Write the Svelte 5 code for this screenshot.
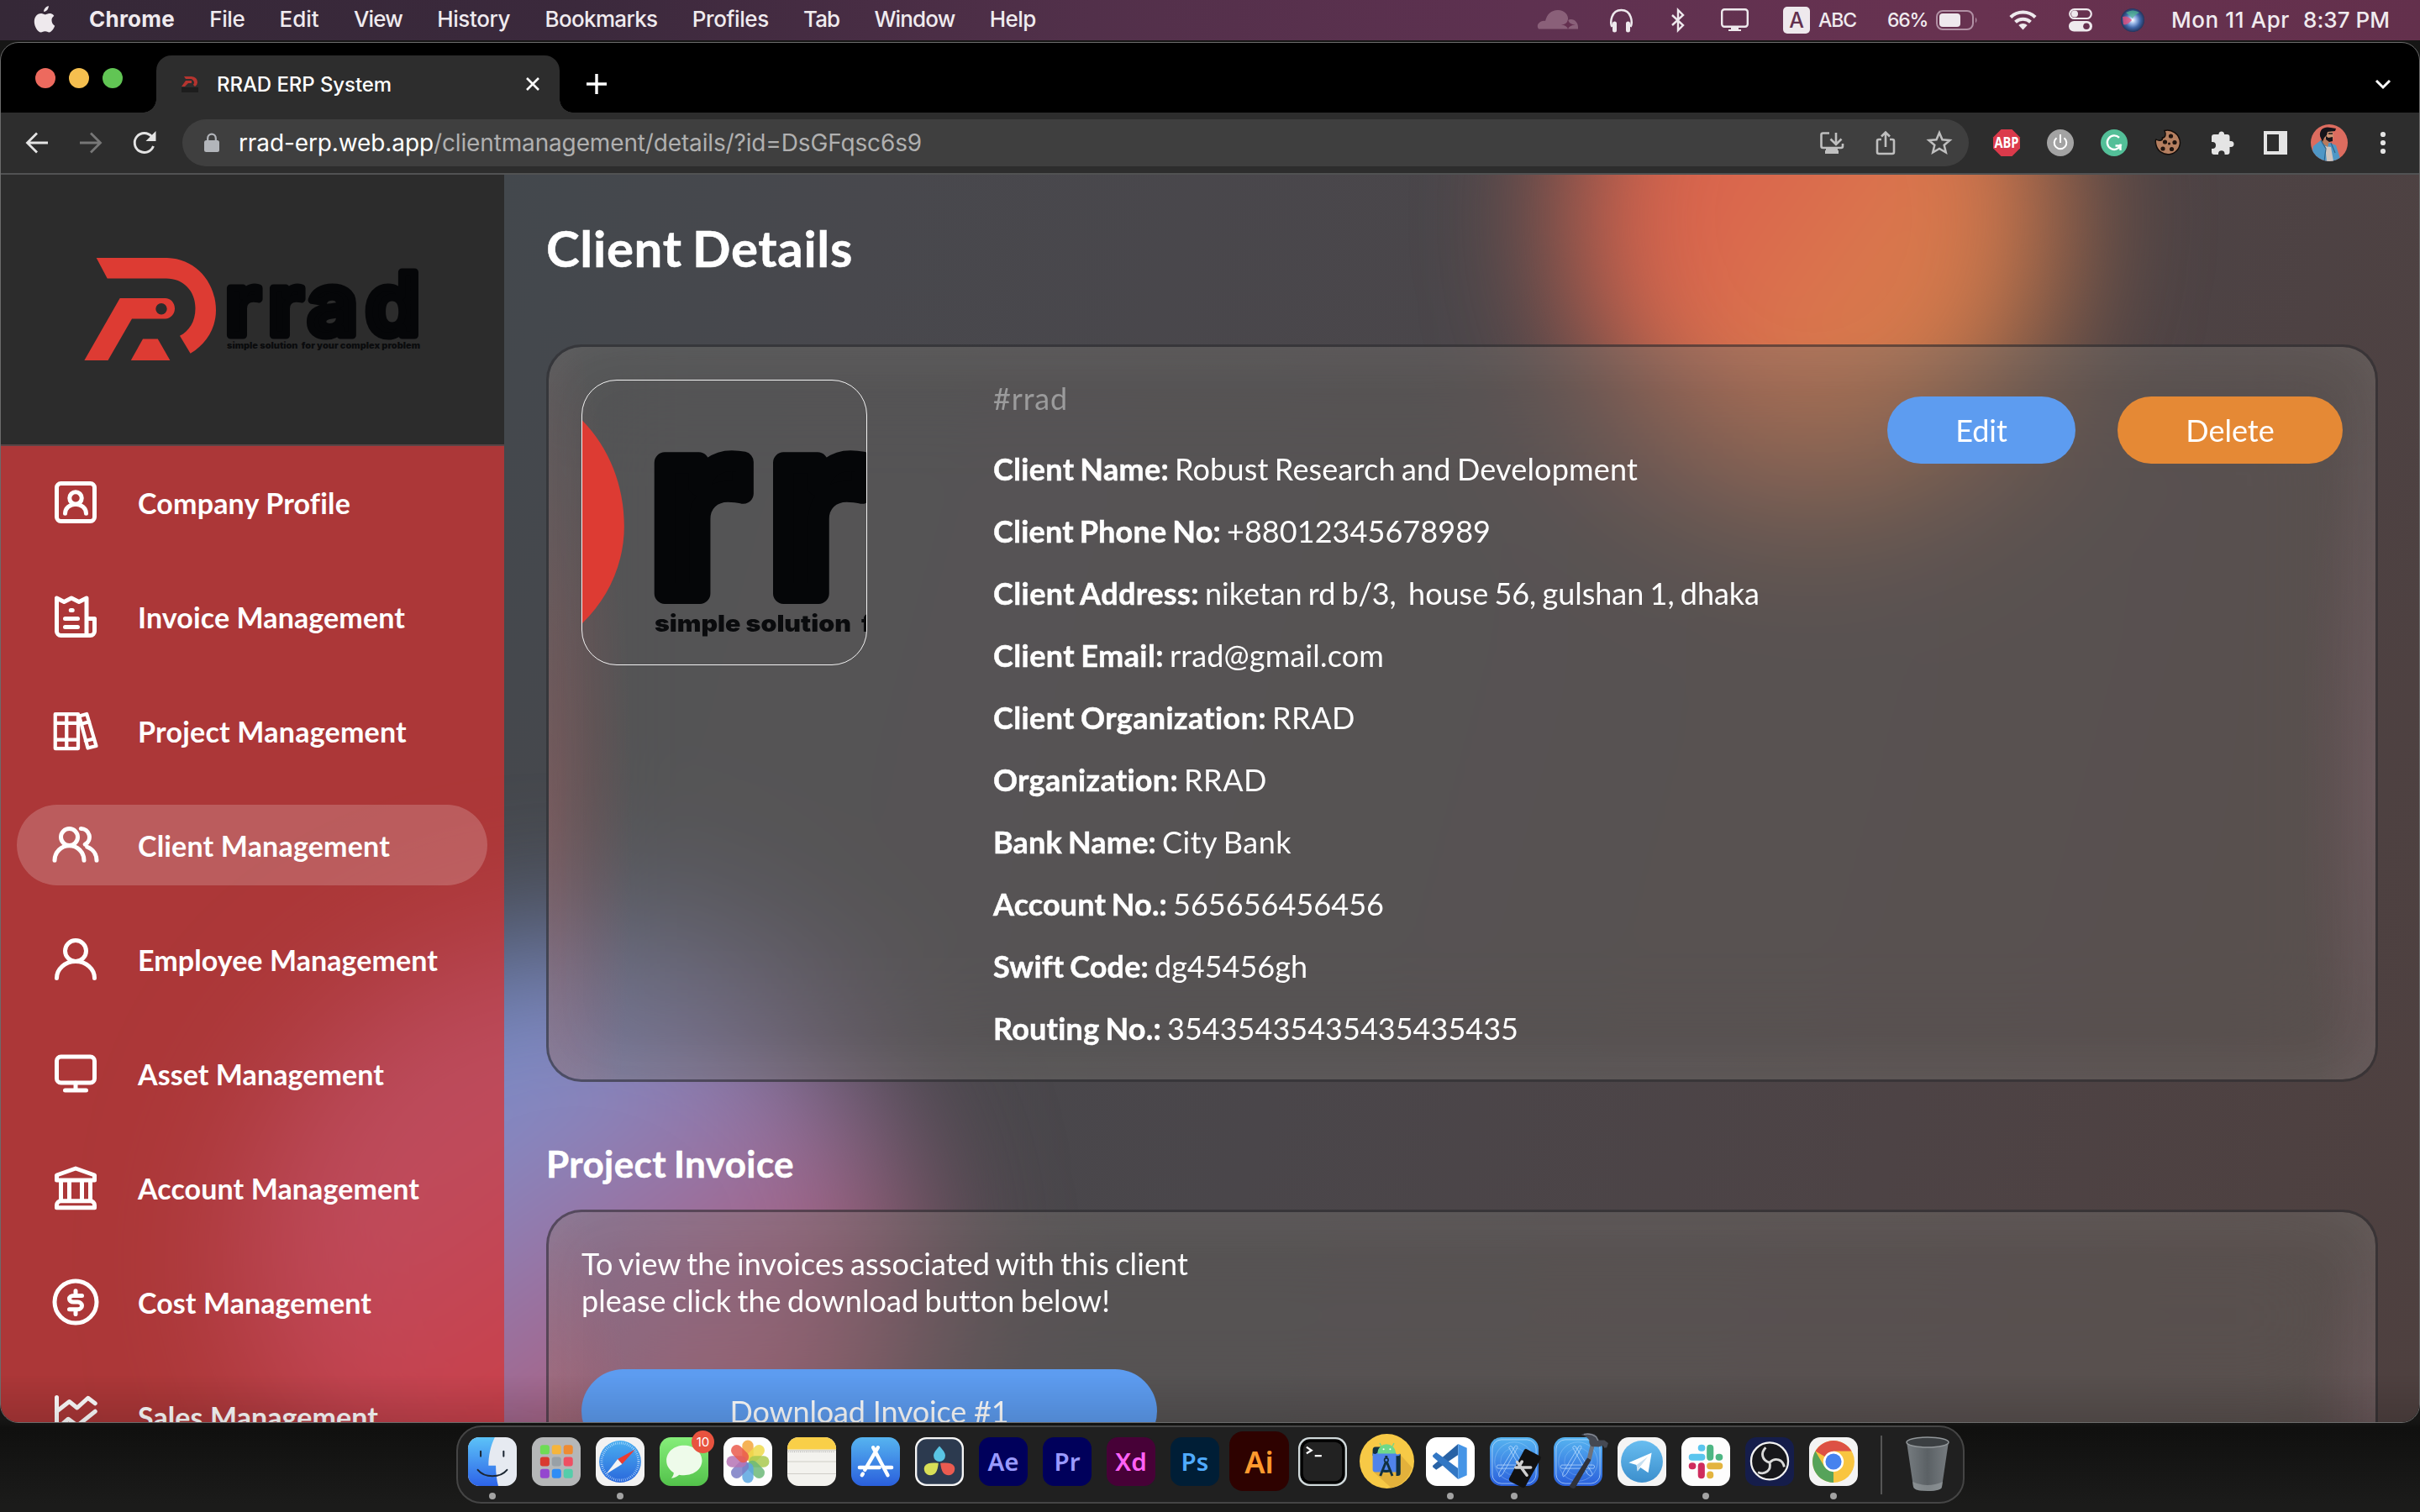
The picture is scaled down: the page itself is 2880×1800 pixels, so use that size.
<script>
  const menus = [
    ['Chrome', 102], ['File', 42], ['Edit', 47], ['View', 58], ['History', 87],
    ['Bookmarks', 134], ['Profiles', 91], ['Tab', 43], ['Window', 96], ['Help', 55]
  ];

  const nav = [
    { id: 'profile', label: 'Company Profile', w: 253 },
    { id: 'invoice', label: 'Invoice Management', w: 318 },
    { id: 'project', label: 'Project Management', w: 320 },
    { id: 'client', label: 'Client Management', w: 300, active: true },
    { id: 'employee', label: 'Employee Management', w: 357 },
    { id: 'asset', label: 'Asset Management', w: 293 },
    { id: 'account', label: 'Account Management', w: 335 },
    { id: 'cost', label: 'Cost Management', w: 278 },
    { id: 'sales', label: 'Sales Management', w: 286 }
  ];

  const details = [
    ['Client Name:', 209, 'Robust Research and Development', 551],
    ['Client Phone No:', 271, '+88012345678989', 314],
    ['Client Address:', 245, 'niketan rd b/3, \u00a0house 56, gulshan 1, dhaka', 660],
    ['Client Email:', 203, 'rrad@gmail.com', 255],
    ['Client Organization:', 325, 'RRAD', 99],
    ['Organization:', 220, 'RRAD', 99],
    ['Bank Name:', 194, 'City Bank', 154],
    ['Account No.:', 207, '565656456456', 251],
    ['Swift Code:', 185, 'dg45456gh', 182],
    ['Routing No.:', 200, '35435435435435435435', 418]
  ];

  const apps = [
    { id: 'finder', running: true }, { id: 'launchpad' }, { id: 'safari', running: true },
    { id: 'messages' }, { id: 'photos' }, { id: 'notes' }, { id: 'appstore' }, { id: 'resolve' },
    { id: 'adobe', text: 'Ae', bg: '#00005b', fg: '#9a9aff' },
    { id: 'adobe', text: 'Pr', bg: '#00005b', fg: '#9a9aff' },
    { id: 'adobe', text: 'Xd', bg: '#470137', fg: '#ff61f6' },
    { id: 'adobe', text: 'Ps', bg: '#001e36', fg: '#4fabff' },
    { id: 'illustrator' }, { id: 'terminal' }, { id: 'android' },
    { id: 'vscode', running: true }, { id: 'simulator', running: true }, { id: 'xcode' },
    { id: 'telegram' }, { id: 'slack', running: true }, { id: 'obs' }, { id: 'chrome', running: true }
  ];

  const petals = ['#f3a53a', '#efd94a', '#a9c94f', '#6cb878', '#5aa6e0', '#7a7cc4', '#b573b5', '#ea5b4c'];
  const pads = ['#6fdc55', '#f6b53c', '#ee8b32', '#d93a2f', '#98a0a6', '#ef4f62', '#9447cf', '#2f8df5', '#55cdaa'];

  // Spreads letters so a label occupies the given width.
  function fit(node, width) {
    const natural = node.getBoundingClientRect().width;
    const step = (width - natural) / node.textContent.length;
    node.style.letterSpacing = `${step}px`;
  }
</script>

{#snippet logo(kind)}
  <svg class={kind} viewBox="100 308 400 122" preserveAspectRatio="xMidYMid slice">
    <g fill="#dd3b33">
      <path d="M114.7 308H199C234 309 257 338 257 370.500C257 392 245 411 226.600 421.700L214 400.800C225 395 232.500 384 232.500 368C232.500 347 218 332.400 197.700 332.400H127.700Z" />
      <path fill-rule="evenodd" d="M142.700 356H196.500C203 356 208 361.500 208 368.200S203 380.400 196.500 380.400H157L128.500 430H100.400ZM192 362A6.700 6.700 0 1 0 192 375.400A6.700 6.700 0 1 0 192 362Z" />
      <path d="M170 404.400H187.800L202.400 430H155.800Z" />
    </g>
    <text class="word" x="268 319 366 435" y="399.500">rrad</text>
    <text class="tag" x="270" y="415.800" textLength="230" lengthAdjust="spacingAndGlyphs">simple solution &#160;for your complex problem</text>
  </svg>
{/snippet}

{#snippet navIcon(id)}
  <svg class="nav-icon" viewBox="0 0 24 24">
    {#if id === 'profile'}
      <rect x="3" y="3" width="18" height="18" rx="2" />
      <circle cx="12" cy="10" r="2.900" />
      <path d="M7 17.300a5 4.400 0 0 1 10 0" />
    {:else if id === 'invoice'}
      <path d="M17.200 21V3.200L13.600 5 10 3.200 6.500 5 3 3.200V19a2 2 0 0 0 2 2h14a2 2 0 0 0 2-2v-6h-3.800M9.700 9h.8M7 13h6M7 17h6" />
    {:else if id === 'project'}
      <g stroke-width="1.700">
        <path d="M2.300 4H13.200V20.400H2.300ZM7.700 4V20.400M2.300 8.300H13M2.300 16.200H13" />
        <path d="M13.700 5 17.300 4 21.800 19.200 17.800 20.200ZM14.700 8.700 18.500 7.700M16.700 16.800 20.700 15.800" />
      </g>
    {:else if id === 'client'}
      <circle cx="9" cy="8.200" r="4" />
      <path d="M2 19.300a7 7 0 0 1 14 0M14.500 4.200a4 4 0 0 1 2 7.500M17.500 12.900C20.300 14 22 16.500 22 19.300" />
    {:else if id === 'employee'}
      <circle cx="12" cy="8" r="5" />
      <path d="M3 21a9 8 0 0 1 18 0" />
    {:else if id === 'asset'}
      <rect x="3" y="4" width="18" height="12.400" rx="2" />
      <path d="M12 16.500V20M7 20h10" />
    {:else if id === 'account'}
      <path d="M3 6 12 2.800 21 6v2.400H3ZM5 9v9M9 9v9M15 9v9M19 9v9M5 18.300h14a2 2 0 0 1 2 2v1.200H3v-1.200a2 2 0 0 1 2-2Z" />
    {:else if id === 'cost'}
      <circle cx="12" cy="12" r="10" />
      <path d="M15 9h-4a2 1.500 0 0 0-2 1.500 2 1.500 0 0 0 2 1.500h2a2 1.750 0 0 1 2 1.750 2 1.750 0 0 1-2 1.750H9M12 6.700V9M12 15.500v2.300" />
    {:else}
      <path d="M3 3v18M3 9.700 9 5l3.700 3L17.900 3.300l3.400 2.600M3 18l5.500-4.700 4.300 3.200 8.500-6.800" />
    {/if}
  </svg>
{/snippet}

{#snippet tile(fill)}
  <rect width="100" height="100" rx="23" {fill} />
{/snippet}

{#snippet blueprint()}
  {@render tile('url(#gStore)')}
  <g fill="none" stroke="#c4e2ff" stroke-opacity=".75" stroke-width="1.600">
    <rect x="5" y="5" width="90" height="90" rx="19" />
    <circle cx="50" cy="50" r="40" stroke-opacity=".35" />
    <circle cx="50" cy="50" r="28" stroke-opacity=".25" />
    <path d="M39 21Q41 16 45 19L79 74Q80 80 75 79L70 76ZM52 18Q57 16 57 21L26 76 20 81Q17 78 19 73ZM16 57H82Q86 60 82 64H16Q12 60 16 57Z" />
  </g>
{/snippet}

{#snippet appIcon(app)}
  <svg class="app-icon" class:large={app.id === 'illustrator'} class:round={app.id === 'android'} viewBox="0 0 100 100">
    {#if app.id === 'finder'}
      {@render tile('#e6eaf1')}
      <path d="M23 0H55C46 18 42 38 42 58H57C57 74 59 88 62 100H23A23 23 0 0 1 0 77V23A23 23 0 0 1 23 0Z" fill="url(#gFinder)" />
      <path d="M26 29v10M73 29v10M20 67C34 84 66 84 80 67" fill="none" stroke="#1c2733" stroke-width="3.500" stroke-linecap="round" />
    {:else if app.id === 'launchpad'}
      {@render tile('#b5b7b8')}
      {#each pads as color, i}
        <rect x={17 + (i % 3) * 24} y={16 + Math.floor(i / 3) * 24.500} width="19" height="19" rx="5" fill={color} />
      {/each}
    {:else if app.id === 'safari'}
      {@render tile('#f2f2f2')}
      <circle cx="50" cy="50" r="43" fill="url(#gSafari)" />
      <circle cx="50" cy="50" r="38" fill="none" stroke="#d7ecff" stroke-width="5" stroke-dasharray="1 3" />
      <path d="M81 25 45 45 54 55Z" fill="#ee3b30" />
      <path d="M21 76 45 45 54 55Z" fill="#f4f4f4" />
    {:else if app.id === 'messages'}
      {@render tile('url(#gMsg)')}
      <path d="M50 17C29 17 14 31 14 48C14 59 20 67 29 73C29 78 26 82 24 84C31 83 37 80 40 77C65 82 87 68 87 48C87 31 71 17 50 17Z" fill="#eefbea" />
    {:else if app.id === 'photos'}
      {@render tile('#fdfdfd')}
      {#each petals as color, i}
        <rect x="38.500" y="6" width="23" height="42" rx="11.500" fill={color} fill-opacity=".85" transform={`rotate(${i * 45} 50 50)`} />
      {/each}
    {:else if app.id === 'notes'}
      {@render tile('#f3f2ee')}
      <path d="M0 25V23A23 23 0 0 1 23 0H77A23 23 0 0 1 100 23V25Z" fill="#f9cf48" />
      <path d="M0 27H100M0 50H100M0 75H100" stroke="#c9c7c2" stroke-width="1.500" />
      <path d="M2 30H98" stroke="#aaa" stroke-width="2" stroke-dasharray="1.500 2.500" />
    {:else if app.id === 'appstore'}
      {@render tile('url(#gStore)')}
      <path d="M45 21 75 78M55 21 28 67M17 62H58M69 62H83M24 75 22 78" stroke="#fff" stroke-width="7.500" stroke-linecap="round" />
    {:else if app.id === 'resolve'}
      {@render tile('#f5f5f5')}
      <rect x="4" y="4" width="92" height="92" rx="20" fill="#2c3a4f" />
      <path d="M50 18C60 29 62 34 62 38A12 12 0 0 1 38 38C38 34 40 29 50 18Z" fill="#59c4e4" />
      <path d="M48 53C46 70 42 78 31 78A13 13 0 0 1 20 59C25 52 34 52 48 53Z" fill="#d8df57" />
      <path d="M52 53C54 70 58 78 69 78A13 13 0 0 0 80 59C75 52 66 52 52 53Z" fill="#ea5b50" />
    {:else if app.id === 'adobe'}
      {@render tile(app.bg)}
      <text class="adobe" x="50" y="69" fill={app.fg}>{app.text}</text>
    {:else if app.id === 'illustrator'}
      {@render tile('#2e0200')}
      <text class="adobe" x="50" y="70" fill="#ff9a2e">Ai</text>
    {:else if app.id === 'terminal'}
      {@render tile('#cfd8da')}
      <rect x="4" y="4" width="92" height="92" rx="20" fill="#000" />
      <rect x="10" y="10" width="80" height="80" rx="15" fill="#222" />
      <path d="M17 20 27 27 17 33M34 38H48" fill="none" stroke="#fff" stroke-width="4" />
    {:else if app.id === 'android'}
      <circle cx="50" cy="50" r="50" fill="#f7c946" />
      <path d="M73 36 96 62A50 50 0 0 1 58 99L26 70Z" fill="#e3b13b" />
      <path d="M24 30Q24 24 29 24H40V40H24Z" fill="#12303f" />
      <path d="M24 34Q24 37 29 37L34 34H66Q66 40 74 36V70H29Q24 70 24 65Z" fill="#5083ea" />
      <path d="M34 35A15.500 15 0 0 1 65 35ZM40 23 37 17M60 23 63 17" fill="#6fd98b" stroke="#6fd98b" stroke-width="2" />
      <circle cx="44" cy="28" r="1.600" fill="#fff" /><circle cx="56" cy="28" r="1.600" fill="#fff" />
      <path d="M67 40Q73 42 75 36V72Q75 77 70 77H67Z" fill="#12303f" />
      <path d="M48 52 38 77M50 52 60 77M41 66Q49 71 58 66M49 40V44" fill="none" stroke="#12303f" stroke-width="4.500" />
      <circle cx="49" cy="48" r="3.500" fill="#5083ea" stroke="#12303f" stroke-width="2.500" />
    {:else if app.id === 'vscode'}
      {@render tile('#fff')}
      <path d="M21 67 14 61V58L66 14V36Z" fill="#2862a5" />
      <path d="M21 31 14 37V40L66 86V64Z" fill="#3277c4" />
      <path d="M66 14 84 22V78L66 86Z" fill="#4695e6" />
    {:else if app.id === 'simulator'}
      {@render blueprint()}
      <path d="M75 24 103 39Q106 41 104 45L73 101Q70 105 66 103L42 91Q38 88 40 84L70 27Q72 23 75 24Z" fill="#111" />
      <path d="M56 51 76 78M53 62 84 62M66 50 60 60" stroke="#cfcfcf" stroke-width="6" stroke-linecap="round" />
    {:else if app.id === 'xcode'}
      {@render blueprint()}
      <path d="M69 42 77 46 44 104Q38 107 32 101Z" fill="#30323a" />
      <path d="M76 12 84 16 77 46 69 42Z" fill="#6e727b" />
      <path d="M56-5Q68-12 84-6 90-2 93 6L104 6 112 12 109 21 104 22 101 17 93 20 78 19Q72 14 73 6 66-3 56-5Z" fill="#454953" />
      <path d="M62-6Q76-9 87-1L91 7" fill="none" stroke="#8a8f98" stroke-width="2" />
    {:else if app.id === 'telegram'}
      {@render tile('#f4f4f4')}
      <circle cx="50" cy="50" r="43" fill="url(#gTele)" />
      <path d="M23 52 70 32 63 73 47 62 41 70 39 57Z" fill="#fff" />
      <path d="M39 57 62 40 45 62 41 70Z" fill="#c6dff0" />
    {:else if app.id === 'slack'}
      {@render tile('#fdfdfd')}
      <g stroke-width="14" stroke-linecap="round">
        <path d="M41 22H42M22 41H42" stroke="#5ac5ee" />
        <path d="M59 22V41M78 41H77" stroke="#4db683" />
        <path d="M59 59H78M59 78V77" stroke="#e3b43f" />
        <path d="M41 59V78M22 59H23" stroke="#cf2c5d" />
      </g>
    {:else if app.id === 'obs'}
      {@render tile('#151d4b')}
      <circle cx="50" cy="49" r="38" fill="#17171b" stroke="#f2f2f2" stroke-width="4" />
      <path d="M50 52C34 48 31 32 42 21M50 52C62 40 77 46 80 61M50 52C54 68 41 78 26 72" fill="none" stroke="#d9d9d9" stroke-width="5" />
    {:else}
      {@render tile('#f4f4f4')}
      <circle cx="50" cy="50" r="43" fill="#f9c540" />
      <path d="M50 50 12.800 28.500A43 43 0 0 1 87.200 28.500H50Z" fill="#dd5144" />
      <path d="M50 50 50 93A43 43 0 0 1 12.800 28.500L31 60Z" fill="#56a35a" />
      <circle cx="50" cy="50" r="21" fill="#fff" />
      <circle cx="50" cy="50" r="16.500" fill="#4682ee" />
    {/if}
  </svg>
{/snippet}

<svg class="defs" width="0" height="0">
  <defs>
    <linearGradient id="gFinder" x2="0" y2="1"><stop stop-color="#5cc3f8" /><stop offset="1" stop-color="#2d63e8" /></linearGradient>
    <linearGradient id="gSafari" x2="0" y2="1"><stop stop-color="#4aaef0" /><stop offset="1" stop-color="#2a68dc" /></linearGradient>
    <linearGradient id="gMsg" x2="0" y2="1"><stop stop-color="#86ee7a" /><stop offset="1" stop-color="#53c24b" /></linearGradient>
    <linearGradient id="gStore" x2="0" y2="1"><stop stop-color="#56b4f0" /><stop offset="1" stop-color="#2a5fdc" /></linearGradient>
    <linearGradient id="gTele" x2="0" y2="1"><stop stop-color="#68bdf0" /><stop offset="1" stop-color="#3c8fcd" /></linearGradient>
    <linearGradient id="gTrash"><stop stop-color="#767c80" /><stop offset=".5" stop-color="#5b6165" /><stop offset="1" stop-color="#777c80" /></linearGradient>
    <radialGradient id="gSiri"><stop stop-color="#fff" /><stop offset=".3" stop-color="#9ab8e8" /><stop offset=".65" stop-color="#3f66a8" /><stop offset="1" stop-color="#23345c" /></radialGradient>
  </defs>
</svg>

<div class="desktop">
  <header class="menubar">
    <svg class="apple" viewBox="0 0 26 32"><path d="M17.800 0C18.200 3 15.500 7 12.200 7C11.800 4 14.600.700 17.800 0ZM21.500 16.800C21.500 13.500 24.300 12 24.400 11.900C22.700 9.500 20.200 9.100 19.300 9.100C17 8.900 15 10.400 13.800 10.400C12.700 10.400 11 9.100 9.100 9.100C3.600 9.200.800 13.600.800 19C.800 24.500 4.800 31.500 8.800 31.500C10.600 31.500 11.400 30.300 13.700 30.300C16 30.300 16.600 31.500 18.600 31.500C21.500 31.400 24.500 26.400 25.200 23.600C25.100 23.500 21.500 22.100 21.500 16.800Z" fill="#eee9ed" /></svg>
    <nav class="menus">
      {#each menus as [label, w]}<span use:fit={w}>{label}</span>{/each}
    </nav>
    <div class="status">
      <svg class="s-cloud" viewBox="0 0 50 23"><path d="M2 22.500C-2 17 5 12 10 13C12 5 17 0 25 0C33 0 38 6 37 12C43 9 50 14 49 22.500Z" fill="#8a6079" /><path d="M37 11Q38 17 46 17.500Q38 18 37 23Q36 18 29 17.500Q36 17 37 11Z" fill="#653050" /></svg>
      <svg class="s-head" viewBox="0 0 27 28" fill="none" stroke="#eee9ed" stroke-width="2.500"><path d="M2.500 22C0 17 1 2 13.500 2S27 17 24.500 22" /><path d="M5.500 18v8M21.500 18v8" stroke-width="5" stroke-linecap="round" /></svg>
      <svg class="s-bt" viewBox="0 0 18 28" fill="none" stroke="#eee9ed" stroke-width="2.400"><path d="M2 8 15 20 9 26V2L15 8 2 20" /></svg>
      <svg class="s-disp" viewBox="0 0 33 28"><rect x="1.200" y="1.200" width="30.600" height="20.600" rx="3" fill="none" stroke="#eee9ed" stroke-width="2.400" /><path d="M12 22H21V25H24V27H9V25H12Z" fill="#eee9ed" /></svg>
      <span class="abc-box">A</span>
      <span class="abc" use:fit={45}>ABC</span>
      <span class="pct" use:fit={48}>66%</span>
      <svg class="s-batt" viewBox="0 0 50 24"><rect x="1" y="1" width="43" height="22" rx="7" fill="none" stroke="#b190a4" stroke-width="2" /><rect x="4" y="4" width="25" height="16" rx="4" fill="#eee9ed" /><path d="M47 8.500Q50 12 47 15.500Z" fill="#b190a4" /></svg>
      <svg class="s-wifi" viewBox="0 0 33 25" fill="none" stroke="#eee9ed" stroke-width="4"><path d="M1.800 9.500A21 21 0 0 1 31.200 9.500M7.500 15.300A13 13 0 0 1 25.500 15.300" /><path d="M16.500 24.500 11.300 19A7.500 7.500 0 0 1 21.700 19Z" fill="#eee9ed" stroke="none" /></svg>
      <svg class="s-cc" viewBox="0 0 28 28"><rect x="1.200" y="1.200" width="25.600" height="10.800" rx="5.400" fill="none" stroke="#eee9ed" stroke-width="2.200" /><circle cx="7" cy="6.600" r="4" fill="#eee9ed" /><rect y="15" width="28" height="12.500" rx="6.200" fill="#eee9ed" /><circle cx="21" cy="21.200" r="3.800" fill="#66304f" /></svg>
      <svg class="s-siri" viewBox="0 0 28 28"><circle cx="14" cy="14" r="14" fill="url(#gSiri)" /><path d="M2 10Q8 8 13 14Q7 21 3 19Z" fill="#e34f7c" fill-opacity=".8" /><path d="M6 5Q14 0 22 5Q16 8 14 12Q10 8 6 5Z" fill="#4fb98f" fill-opacity=".7" /></svg>
      <span class="date" use:fit={141}>Mon 11 Apr</span>
      <span class="time" use:fit={103}>8:37 PM</span>
    </div>
  </header>

  <main class="window">
    <div class="tabstrip">
      <div class="lights"><i class="red"></i><i class="yellow"></i><i class="green"></i></div>
      <div class="tab">
        <svg class="favicon" viewBox="0 0 20 20"><path d="M3 1H12Q19 2 19 8Q19 11 16 13L14 11Q16 8 14 6Q13 4 11 4H5ZM5 6H12V9H8L4 13H0Z" fill="#b5342f" /><path d="M0 14H20V20H0Z" fill="#1d1d1d" /></svg>
        <span class="tab-title" use:fit={208}>RRAD ERP System</span>
        <svg class="close" viewBox="0 0 18 18"><path d="M2 2 16 16M16 2 2 16" stroke="#fff" stroke-width="2.600" /></svg>
      </div>
      <svg class="plus" viewBox="0 0 24 24"><path d="M12 0V24M0 12H24" stroke="#fff" stroke-width="3.400" /></svg>
      <svg class="chev" viewBox="0 0 20 12"><path d="M2 2 10 10 18 2" fill="none" stroke="#fff" stroke-width="3" /></svg>
    </div>

    <div class="toolbar">
      <svg class="tb" viewBox="0 0 28 28"><path d="M27 14H3M14 2.500 2.500 14 14 25.500" fill="none" stroke="#e4e4e4" stroke-width="2.800" /></svg>
      <svg class="tb" viewBox="0 0 28 28"><path d="M1 14H25M14 2.500 25.500 14 14 25.500" fill="none" stroke="#777" stroke-width="2.800" /></svg>
      <svg class="tb" viewBox="0 0 28 28"><path d="M24.500 18A11.500 11.500 0 1 1 22.500 6.500" fill="none" stroke="#e4e4e4" stroke-width="2.900" /><path d="M27.500 0V12H15.500Z" fill="#e4e4e4" /></svg>
      <div class="url">
        <svg class="lock" viewBox="0 0 18 22"><rect y="8" width="18" height="14" rx="2.500" fill="#b2b5ba" /><path d="M4.200 9V5.500A4.800 4.800 0 0 1 13.800 5.500V9" fill="none" stroke="#b2b5ba" stroke-width="2.200" /></svg>
        <span class="host" use:fit={232}>rrad-erp.web.app</span><span class="path" use:fit={581}>/clientmanagement/details/?id=DsGFqsc6s9</span>
        <div class="url-icons">
          <svg viewBox="0 0 32 32" fill="none" stroke="#bfbfbf" stroke-width="2.600"><path d="M13 4.500H5.500Q3.500 4.500 3.500 6.500V20Q3.500 22 5.500 22H27Q29 22 29 20V17M21 4V17M14.500 11.500 21 18 27.500 11.500" /><path d="M8 27H24M9 25H23" stroke-width="4" /></svg>
          <svg viewBox="0 0 32 32" fill="none" stroke="#bfbfbf" stroke-width="2.600"><path d="M11 12H8Q6 12 6 14V27Q6 29 8 29H24Q26 29 26 27V14Q26 12 24 12H21M16 21V4M11 8.500 16 3.500 21 8.500" /></svg>
          <svg viewBox="0 0 32 32" fill="none" stroke="#bfbfbf" stroke-width="2.500"><path d="M16 4 19.500 12.200 28.500 13 21.700 18.800 23.800 27.500 16 22.900 8.200 27.500 10.300 18.800 3.500 13 12.500 12.200Z" /></svg>
        </div>
      </div>
      <div class="exts">
        <svg viewBox="0 0 32 32"><path d="M9.500 0H22.500L32 9.500V22.500L22.500 32H9.500L0 22.500V9.500Z" fill="#db3a4b" /><text class="abp" x="1.500" y="22" textLength="29" lengthAdjust="spacingAndGlyphs">ABP</text></svg>
        <svg viewBox="0 0 32 32"><circle cx="16" cy="16" r="16" fill="#a3a3a3" /><path d="M11.500 10.200A7.300 7.300 0 1 0 20.500 10.200M16 6V16" fill="none" stroke="#fff" stroke-width="2" /></svg>
        <svg viewBox="0 0 32 32"><circle cx="16" cy="16" r="16" fill="#53bf98" /><path d="M22 9.800A8.300 8.300 0 1 0 23.500 19.500H17.500M23.500 17.500V25" fill="none" stroke="#fff" stroke-width="2.400" /></svg>
        <svg viewBox="0 0 32 32"><path d="M12 1.500C20-.500 30 5 30.500 16A14.500 14.500 0 0 1 2 19C1 15 1 13 2 12C5 14 10 14 9.500 10C13 10 14 6 12 1.500Z" fill="#b57f60" stroke="#130d0a" stroke-width="1.500" /><g fill="#20140f"><circle cx="19.500" cy="8" r="2.600" /><circle cx="12.500" cy="15" r="2.600" /><circle cx="24" cy="15.500" r="2.600" /><circle cx="17.500" cy="17" r="1.500" /><circle cx="10" cy="23" r="2.600" /><circle cx="20.500" cy="23.500" r="2.600" /></g></svg>
        <svg viewBox="0 0 32 32"><path d="M12.500 6V5.300A3.300 3.300 0 0 1 19 5.300V6H22.500Q25.500 6 25.500 9V14H27A3.400 3.400 0 0 1 27 21H25.500V27Q25.500 30 22.500 30H19.500V28.500A3.800 3.800 0 0 0 12 28.500V30H7Q4 30 4 27V23H5A4 4 0 0 0 5 15H4V9Q4 6 7 6Z" fill="#e4e4e4" /></svg>
        <svg viewBox="0 0 32 32"><path fill-rule="evenodd" d="M2 2H30V30H2ZM6 6V26H20V6Z" fill="#e4e4e4" /></svg>
        <svg class="avatar" viewBox="0 0 44 44">
          <clipPath id="av"><circle cx="22" cy="22" r="22" /></clipPath>
          <g clip-path="url(#av)">
            <rect width="44" height="44" fill="#dc6c5f" />
            <path d="M0 44 3 26 12 19 20 21 30 25 36 44Z" fill="#4f97c6" />
            <path d="M17 26 19 44H27L24 27Z" fill="#cfc4bd" />
            <path d="M14 16 13 22 20 27 22 20Z" fill="#b97b5c" />
            <path d="M17 8H26L27 15 25 20 19 18 14 15Z" fill="#cb9070" />
            <path d="M11 14C10 5 17 2 24 4L30 5 29 8 20 9 19 13 16 16 14 21ZM18 14 21 16 26 15 26 20 22 21 18 18Z" fill="#15131a" />
            <path d="M21 11H26" stroke="#15131a" stroke-width="1.500" />
            <path d="M12 19 18 29 16 44M24 22 29 34" fill="none" stroke="#2e6389" stroke-width="1.200" />
          </g>
        </svg>
        <svg viewBox="0 0 32 32" fill="#e4e4e4"><circle cx="16" cy="6" r="3.100" /><circle cx="16" cy="16" r="3.100" /><circle cx="16" cy="26" r="3.100" /></svg>
      </div>
    </div>

    <section class="page">
      <div class="blob warm"></div>
      <div class="blob cool"></div>

      <aside class="sidebar">
        <div class="brand">{@render logo('brand-logo')}</div>
        <ul>
          {#each nav as item}
            <li>
              <a class:active={item.active}>
                {@render navIcon(item.id)}
                <span use:fit={item.w}>{item.label}</span>
              </a>
            </li>
          {/each}
        </ul>
      </aside>

      <div class="content">
        <h1><span use:fit={365}>Client Details</span></h1>
        <article class="card client">
          <div class="thumb">{@render logo('thumb-logo')}</div>
          <div class="info">
            <p class="handle"><span use:fit={89}>#rrad</span></p>
            {#each details as [label, labelWidth, value, valueWidth]}
              <p class="row"><b use:fit={labelWidth}>{label}</b><span use:fit={valueWidth}>{value}</span></p>
            {/each}
          </div>
          <div class="actions">
            <button class="edit">Edit</button>
            <button class="delete">Delete</button>
          </div>
        </article>

        <h2><span use:fit={295}>Project Invoice</span></h2>
        <article class="card invoice">
          <p><span use:fit={722}>To view the invoices associated with this client</span><br /><span use:fit={629}>please click the download button below!</span></p>
          <button class="download"><span use:fit={332}>Download Invoice #1</span></button>
        </article>
      </div>
      <div class="fade"></div>
    </section>
  </main>

  <footer class="dock">
    {#each apps as app}
      <div class="slot">
        {@render appIcon(app)}
        {#if app.id === 'messages'}<span class="badge">10</span>{/if}
        {#if app.running}<i class="dot"></i>{/if}
      </div>
    {/each}
    <span class="sep"></span>
    <svg class="trash" viewBox="0 0 52 66"><path d="M1 6 9 60Q10 65 26 65T43 60L51 6Z" fill="url(#gTrash)" /><ellipse cx="26" cy="7" rx="25" ry="6" fill="#3b3f42" stroke="#92979a" stroke-width="1.500" /><path d="M8 54Q26 62 44 54L43 60Q42 65 26 65T9 60Z" fill="#a4a9ac" fill-opacity=".5" /></svg>
  </footer>
</div>

<style>
  :global(body) { margin: 0; background: #191918; }
  * { box-sizing: border-box; }
  p, h1, h2, ul { margin: 0; padding: 0; }
  svg { display: block; flex: none; overflow: visible; }
  .defs { position: absolute; }

  .desktop {
    width: 2880px; height: 1800px; overflow: hidden;
    display: flex; flex-direction: column;
    background: linear-gradient(#161615 0 1690px, #10100f 1700px, #1b1b1a 1790px);
    font-family: Inter, "Liberation Sans", sans-serif; color: #fff;
  }

  .menubar {
    height: 48px; flex: none; display: flex; align-items: center;
    padding: 0 36px 0 40px;
    background: linear-gradient(90deg, #352837 0, #3b293c 24%, #52304a 45%, #5e3150 63%, #683250 82%, #63304c 100%);
    color: #f0ebef; font-size: 26px; white-space: nowrap;
  }
  .apple { width: 26px; height: 32px; margin-top: -2px; }
  .menus { display: flex; gap: 41.300px; margin: -3px 0 0 40px; font-weight: 500; }
  .menus span:first-child { font-weight: 700; }
  .status { display: flex; align-items: center; margin: -1px 0 0 auto; font-weight: 500; }
  .s-cloud { width: 50px; margin-right: 37px; }
  .s-head { width: 27px; margin-right: 45px; }
  .s-bt { width: 18px; margin-right: 42px; }
  .s-disp { width: 33px; margin-right: 41px; }
  .abc-box { width: 32px; height: 32px; border-radius: 5px; background: #eee9ed; color: #62304e; text-align: center; line-height: 32px; font-size: 25px; margin-right: 10px; }
  .abc { font-size: 23px; margin-right: 37px; }
  .pct { font-size: 23px; margin-right: 10px; }
  .s-batt { width: 50px; margin-right: 37px; }
  .s-wifi { width: 33px; margin-right: 38px; }
  .s-cc { width: 28px; margin-right: 34px; }
  .s-siri { width: 28px; margin-right: 32px; }
  .date { margin-right: 16px; }

  .window {
    height: 1644px; flex: none; margin-top: 2px; overflow: hidden;
    border-radius: 22px; border: 1px solid #6b6b6b; background: #000;
    display: flex; flex-direction: column;
  }
  .tabstrip { height: 83px; flex: none; display: flex; align-items: center; padding: 15px 33px 0 41px; }
  .lights { display: flex; gap: 16px; margin-top: -15px; }
  .lights i { width: 24px; height: 24px; border-radius: 50%; }
  .red { background: #ed6a5e; }
  .yellow { background: #f5bf4f; }
  .green { background: #61c554; }
  .tab {
    position: relative; align-self: stretch; width: 480px; margin-left: 40px; padding: 0 23px 0 30px;
    display: flex; align-items: center; background: #2d2d2d; border-radius: 18px 18px 0 0; font-size: 24px;
  }
  .tab::before, .tab::after { content: ""; position: absolute; bottom: 0; width: 16px; height: 16px; }
  .tab::before { left: -16px; background: radial-gradient(circle at 0 0, transparent 15.500px, #2d2d2d 16px); }
  .tab::after { right: -16px; background: radial-gradient(circle at 100% 0, transparent 15.500px, #2d2d2d 16px); }
  .favicon { width: 20px; height: 20px; }
  .tab-title { margin-left: 22px; font-weight: 500; white-space: nowrap; }
  .close { width: 18px; margin-left: auto; }
  .plus { width: 24px; margin-left: 32px; }
  .chev { width: 20px; margin-left: auto; }

  .toolbar { height: 74px; flex: none; display: flex; align-items: center; background: #2d2d2d; border-bottom: 2px solid #515253; padding-left: 29px; }
  .tb { width: 28px; margin-right: 36px; }
  .url { width: 2126px; height: 56px; margin-left: -5px; border-radius: 28px; background: #3f3f3f; display: flex; align-items: center; padding: 0 3px 0 26px; font-size: 28px; white-space: nowrap; }
  .lock { width: 18px; margin-right: 23px; }
  .path { color: #b0b0b0; }
  .url-icons { display: flex; margin-left: auto; }
  .url-icons svg { width: 32px; margin: 0 16px; }
  .exts { display: flex; align-items: center; margin-left: 13px; }
  .exts svg { width: 32px; margin: 0 16px; }
  .exts .avatar { width: 44px; margin: 0 10px; }
  .abp { font: 700 17px "Open Sans", sans-serif; fill: #fff; }

  .page {
    position: relative; flex: 1; display: flex; overflow: hidden; min-height: 0;
    font-family: Lato, "Liberation Sans", sans-serif; font-variant-ligatures: none;
    background: linear-gradient(105deg, #43484d 18%, #48484d 32%, #4a464a 55%, #4d4345 78%, #4e403f 100%);
  }
  .blob { position: absolute; border-radius: 50%; }
  .warm { left: 1862px; top: -270px; width: 590px; height: 640px; background: linear-gradient(125deg, #da644d 38%, #db784d 60%, #cb7e49 90%); filter: blur(80px); }
  .cool { left: 290px; top: 915px; width: 790px; height: 760px; background: linear-gradient(145deg, #7293d2 16%, #8688c2 34%, #9c6f9c 53%, #a9607f 66%, #cc5668 90%); filter: blur(88px); }

  .sidebar { position: relative; width: 599px; flex: none; background: rgba(216, 49, 47, .7); }
  .brand { height: 323px; background: #2c2c2c; border-bottom: 2px solid #5a4446; padding: 99px 0 0 99px; }
  .brand-logo { width: 400px; height: 122px; }
  .word { font: 700 103px Inter, sans-serif; fill: #050608; stroke: #050608; stroke-width: 9; stroke-linejoin: round; word-spacing: 0; }
  .tag { font: 900 10px Inter, sans-serif; fill: #0a0b0d; word-spacing: 0; }
  ul { list-style: none; margin-top: -1px; }
  li { height: 136px; display: flex; align-items: center; padding: 0 20px 0 19px; }
  a { flex: 1; height: 96px; border-radius: 48px; display: flex; align-items: center; padding-left: 40px; font-size: 34px; font-weight: 700; white-space: nowrap; }
  .active { background: rgba(255, 255, 255, .19); }
  .nav-icon { width: 60px; height: 60px; margin-right: 44px; fill: none; stroke: #fff; stroke-width: 2; stroke-linecap: round; stroke-linejoin: round; }

  .content { position: relative; flex: 1; padding: 51px 49px 0 50px; }
  h1, h2, b { -webkit-text-stroke: .5px #fff; }
  h1 { font-size: 60px; line-height: 72px; margin-bottom: 79px; word-spacing: -3px; }
  h2 { font-size: 44px; line-height: 54px; margin: 70px 0 28px; word-spacing: -2px; }
  .card {
    position: relative; border: 3px solid rgba(45, 45, 48, .62); border-radius: 42px; padding: 39px;
    font-size: 36px; line-height: 44px; word-spacing: -2px;
    background:
      radial-gradient(ellipse 100px 70% at 0 65%, rgba(225, 85, 92, .2), transparent),
      radial-gradient(ellipse 90px 60% at 100% 60%, rgba(160, 100, 125, .18), transparent),
      rgba(108, 107, 101, .37);
    background-clip: padding-box;
    box-shadow: inset 0 0 80px rgba(255, 255, 255, .08);
    backdrop-filter: blur(70px);
  }
  .client { height: 878px; display: flex; }
  .thumb { width: 340px; height: 340px; flex: none; overflow: hidden; border: 1.500px solid #f2f2f2; border-radius: 42px; }
  .thumb-logo { width: 100%; height: 100%; }
  .info { margin-left: 150px; white-space: nowrap; }
  .handle { color: #9b9b9c; margin-bottom: 25px; }
  .row { display: flex; gap: 7px; line-height: 74px; }
  .actions { display: flex; gap: 50px; margin: 20px 0 0 auto; }
  button { border: 0; height: 80px; border-radius: 40px; color: #fff; font: inherit; padding: 0; }
  .edit { width: 224px; background: #5d9cf0; }
  .delete { width: 268px; background: #e58935; }
  .invoice { height: 500px; padding-top: 39px; }
  .download { display: block; width: 685px; height: 100px; border-radius: 50px; margin-top: 60px; background: #5d9cf0; }
  .fade { position: absolute; inset: auto 0 0 0; height: 56px; background: linear-gradient(transparent, rgba(0, 0, 0, .13)); }

  .dock {
    height: 93px; width: 1795px; flex: none; margin: 3px 0 0 543px; padding: 0 0 0 5px;
    display: flex; align-items: center; border: 2px solid #454545; border-radius: 30px; background: #202020;
  }
  .slot { position: relative; width: 76px; height: 100%; flex: none; display: flex; align-items: center; justify-content: center; padding-bottom: 8px; }
  .slot:first-child { margin-left: -2px; }
  .app-icon { width: 58px; height: 58px; }
  .large { width: 71px; height: 71px; }
  .round { width: 65px; height: 65px; }
  .adobe { font: 600 51px "Noto Sans", sans-serif; text-anchor: middle; }
  .badge { position: absolute; right: 2px; top: 4px; width: 27px; height: 27px; border-radius: 50%; background: #e8533f; font-size: 15px; line-height: 27px; text-align: center; }
  .dot { position: absolute; bottom: 3px; left: 34px; width: 8px; height: 8px; border-radius: 50%; background: #a3a3a3; }
  .sep { width: 2px; height: 70px; margin-left: 18px; background: #555; }
  .trash { width: 52px; height: 66px; margin: -2px 0 0 28px; }
</style>
